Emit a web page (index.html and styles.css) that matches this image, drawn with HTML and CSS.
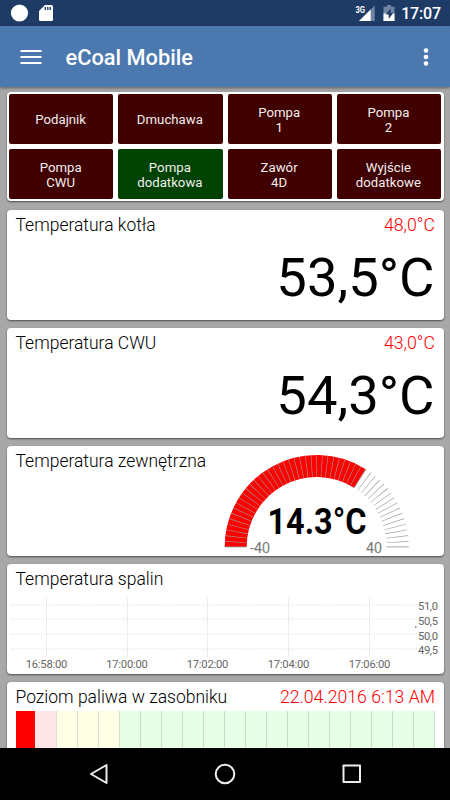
FILE: index.html
```html
<!DOCTYPE html>
<html lang="pl">
<head>
<meta charset="utf-8">
<title>eCoal Mobile</title>
<link rel="stylesheet" href="styles.css">
</head>
<body>
<div class="screen">
  <header class="status">
    <svg class="status-left" width="60" height="26" viewBox="0 0 60 26"><circle cx="19.5" cy="13" r="8.6" fill="#fff"/><path d="M45 5h6.500q1.500 0 1.500 1.500v13q0 1.500-1.500 1.500h-11q-1.500 0-1.500-1.500V11z" fill="#fff"/><path d="M45.300 7v3M47.800 7v3M50.200 7v3" stroke="#1e3b66" stroke-width="1.400"/></svg>
    <svg class="status-right" width="50" height="26" viewBox="0 0 50 26"><text class="net" x="3.500" y="12.500" textLength="9.500" lengthAdjust="spacingAndGlyphs">3G</text><path d="M22.700 5.500V21H7z" fill="#6f83a3"/><path d="M18.700 9.500V21H7z" fill="#fff"/><path d="M35 5h4v1.700h3.500V21h-11V6.700H35z" fill="#6f83a3"/><path d="M31.500 13.500h11V21h-11z" fill="#fff"/><path d="M38.700 8.500l-5 6h3v4.500l4.500-6h-2.500z" fill="#1e3b66"/></svg>
    <span class="clock">17:07</span>
  </header>
  <nav class="appbar">
    <svg width="22" height="16" viewBox="0 0 22 16"><path d="M.5 2h21M.5 8h21M.5 14h21" stroke="#fff" stroke-width="2"/></svg>
    <h1>eCoal Mobile</h1>
    <svg width="6" height="20" viewBox="0 0 6 20" fill="#fff"><circle cx="3" cy="3.500" r="2.300"/><circle cx="3" cy="10" r="2.300"/><circle cx="3" cy="16.500" r="2.300"/></svg>
  </nav>
  <main>
    <section class="card outputs">
      <div class="out">Podajnik</div><div class="out">Dmuchawa</div><div class="out">Pompa<br>1</div><div class="out">Pompa<br>2</div>
      <div class="out">Pompa<br>CWU</div><div class="out on">Pompa<br>dodatkowa</div><div class="out">Zawór<br>4D</div><div class="out">Wyjście<br>dodatkowe</div>
    </section>
    <section class="card">
      <div class="head"><h2>Temperatura kotła</h2><span class="target">48,0°C</span></div>
      <div class="value">53,5°C</div>
    </section>
    <section class="card">
      <div class="head"><h2>Temperatura CWU</h2><span class="target">43,0°C</span></div>
      <div class="value">54,3°C</div>
    </section>
    <section class="card split">
      <div class="head"><h2>Temperatura zewnętrzna</h2></div>
      <svg class="gauge" width="192" height="110" viewBox="0 0 192 110">
        <path d="M17.700 101A81 81 0 0 1 141.900 32.460" fill="none" stroke="#f00" stroke-width="22"/>
        <path d="M17.700 101A81 81 0 0 1 179.700 101" fill="none" stroke="#999" stroke-width="22" pathLength="500" stroke-dasharray="1.200 8.800" stroke-dashoffset="0.600"/>
        <path d="M6.700 101h22M168.700 101h22" stroke="#999" stroke-width=".7"/>
        <text class="reading" x="99" y="87.500" text-anchor="middle" textLength="99" lengthAdjust="spacingAndGlyphs">14.3°C</text>
        <text class="scale" x="32" y="106.500" textLength="20" lengthAdjust="spacingAndGlyphs">-40</text><text class="scale" x="148" y="106.500" textLength="16" lengthAdjust="spacingAndGlyphs">40</text>
      </svg>
    </section>
    <section class="card">
      <div class="head"><h2>Temperatura spalin</h2></div>
      <svg class="chart" width="436" height="80" viewBox="7 593.450 436 80">
        <path d="M11 605.500H417M11 619.500H417M11 634.500H417M11 649.500H417M46.500 598V658M127.500 598V658M207.500 598V658M288.500 598V658M369.500 598V658" fill="none" stroke="#e2e2e2" stroke-width="1" stroke-dasharray="1.500 1"/>
        <path d="M415 627.500h1.500" stroke="#a66" stroke-width="1.500"/>
        <g text-anchor="middle"><text x="46.500" y="668.500" textLength="41.500">16:58:00</text><text x="127" y="668.500" textLength="41.500">17:00:00</text><text x="207.500" y="668.500" textLength="41.500">17:02:00</text><text x="288.500" y="668.500" textLength="41.500">17:04:00</text><text x="369.500" y="668.500" textLength="41.500">17:06:00</text></g>
        <g text-anchor="end"><text x="438" y="610" textLength="20">51,0</text><text x="438" y="625" textLength="20">50,5</text><text x="438" y="640" textLength="20">50,0</text><text x="438" y="654.500" textLength="20">49,5</text></g>
      </svg>
    </section>
    <section class="card">
      <div class="head"><h2>Poziom paliwa w zasobniku</h2><span class="target date">22.04.2016 6:13 AM</span></div>
      <div class="fuel"><i class="full"></i><i class="low"></i><i class="mid"></i><i class="mid"></i><i class="mid"></i><i></i><i></i><i></i><i></i><i></i><i></i><i></i><i></i><i></i><i></i><i></i><i></i><i></i><i></i><i></i></div>
    </section>
  </main>
  <footer class="navbar">
    <svg width="20" height="22" viewBox="0 0 20 22"><path d="M17.500 2v18L2 11z"/></svg>
    <svg width="22" height="22" viewBox="0 0 22 22"><circle cx="11" cy="11" r="9.300"/></svg>
    <svg width="20" height="22" viewBox="0 0 20 22"><rect x="1.500" y="2.500" width="16.500" height="16.500"/></svg>
  </footer>
</div>
</body>
</html>
```
FILE: styles.css
```css
* { box-sizing: border-box; }
body { margin: 0; font-family: Roboto, sans-serif; color: #000; }
h1, h2 { margin: 0; }
svg { display: block; flex: none; }
.screen { width: 450px; height: 800px; display: flex; flex-direction: column; overflow: hidden; background: #a8a8a8; }
.status { flex: none; height: 26px; display: flex; align-items: center; background: #1e3b66; color: #fff; }
.status-right { margin-left: auto; }
.net { font-size: 8.5px; font-weight: 700; fill: #fff; }
.clock { width: 48px; font-size: 16px; font-weight: 500; line-height: 26px; padding: 2px 9px 0 0; white-space: nowrap; display: flex; justify-content: flex-end; letter-spacing: -.15px; }
.appbar { flex: none; height: 61px; padding: 0 21px 0 20px; display: flex; align-items: center; background: #4b79af; color: #fff; box-shadow: 0 1px 3px rgba(0,0,0,.45); position: relative; z-index: 1; }
.appbar h1 { margin: 3px auto 0 23.500px; font-size: 21.8px; font-weight: 500; line-height: 30px; }
main { flex: 1; min-height: 0; overflow: hidden; padding: 5px 6.500px 0; display: flex; flex-direction: column; gap: 8.3px; }
.card { flex: none; height: 109.900px; background: #fff; border-radius: 4px; box-shadow: 0 1px 2px rgba(0,0,0,.55); overflow: hidden; }
.outputs { height: 109.450px; display: grid; grid-template-columns: repeat(4, 1fr); grid-template-rows: 50px 50px; gap: 5px; padding: 2px 2.500px; }
.out { display: flex; align-items: center; justify-content: center; text-align: center; background: #400000; color: #f2eeee; border-radius: 2px; font-size: 13.200px; line-height: 15px; letter-spacing: .02px; padding: 1px 1px 0 0; }
.on { background: #004200; }
.head { display: flex; justify-content: space-between; align-items: baseline; padding: 4px 8.500px 0 9px; height: 29px; line-height: 22px; white-space: nowrap; }
.head h2 { font-size: 17.500px; font-weight: 300; }
.target { color: #f00; font-size: 17.700px; font-weight: 300; }
.value { padding: 1px 9px 0 0; text-align: right; font-size: 54.400px; line-height: 76px; }
.split { display: flex; justify-content: space-between; }
.gauge { margin-right: 33.500px; }
.reading { font-size: 37px; font-weight: 700; }
.scale { font-size: 15px; fill: #777; }
.chart { font-size: 11.200px; fill: #666; }
.fuel { display: flex; margin: 0 9px; height: 80px; }
.fuel i { flex: 1; background: #e6ffe6; border-right: 1px solid #ccd9cc; }
.fuel .full { background: #f00; border-color: #ffe6e6; }
.fuel .low { background: #ffe6e6; border-color: #ddd; }
.fuel .mid { background: #ffffe6; border-color: #ddddcf; }
.navbar { flex: none; height: 52px; background: #000; display: flex; justify-content: space-between; align-items: center; padding: 0 88.500px; }
.navbar svg { fill: none; stroke: #eee; stroke-width: 2; stroke-linejoin: round; }
```
